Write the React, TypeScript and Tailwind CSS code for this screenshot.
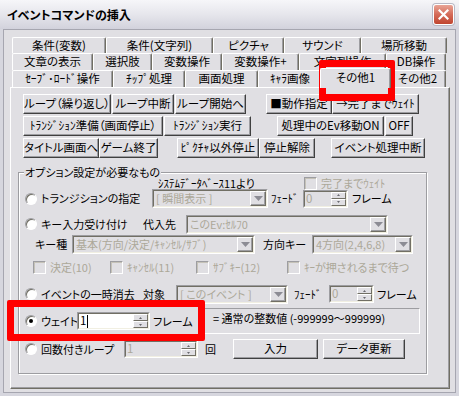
import type { ReactNode } from 'react'

type TabDef = { label: string; w: string; selected?: boolean }

const ROW1: TabDef[] = [
  { label: '条件(変数)', w: 'w-[94px]' },
  { label: '条件(文字列)', w: 'w-[107px]' },
  { label: 'ピクチャ', w: 'w-[71px]' },
  { label: 'サウンド', w: 'w-[77px]' },
  { label: '場所移動', w: 'w-[86px]' },
]
const ROW2: TabDef[] = [
  { label: '文章の表示', w: 'w-[81px]' },
  { label: '選択肢', w: 'w-[59px]' },
  { label: '変数操作', w: 'w-[70px]' },
  { label: '変数操作+', w: 'w-[77px]' },
  { label: '文字列操作', w: 'w-[87px]' },
  { label: 'DB操作', w: 'w-[60px]' },
]
const ROW3: TabDef[] = [
  { label: 'ｾｰﾌﾞ･ﾛｰﾄﾞ操作', w: 'w-[101px]' },
  { label: 'ﾁｯﾌﾟ処理', w: 'w-[72px]' },
  { label: '画面処理', w: 'w-[73px]' },
  { label: 'ｷｬﾗ画像', w: 'w-[64px]' },
  { label: 'その他1', w: 'w-[71px]', selected: true },
  { label: 'その他2', w: 'w-[57px]' },
]

function Tab({ t }: { t: TabDef }) {
  if (t.selected) {
    return (
      <div
        className={`relative z-10 -mx-[2px] -mt-[2px] flex h-[20px] ${t.w} shrink-0 items-center justify-center rounded-t-[2px] border-l border-t border-r border-l-white border-t-white border-r-[#716f64] bg-[#e0dfe3] pb-[1px] shadow-[inset_-1px_0_0_#9d9da1] whitespace-nowrap`}
      >
        {t.label}
      </div>
    )
  }
  return (
    <div
      className={`flex h-full ${t.w} shrink-0 items-center justify-center rounded-t-[2px] border-l border-t border-r border-l-white border-t-white border-r-[#716f64] shadow-[inset_-1px_0_0_#9d9da1] whitespace-nowrap`}
    >
      {t.label}
    </div>
  )
}

function Btn({ w, ml = '', children }: { w: string; ml?: string; children: ReactNode }) {
  return (
    <button
      type="button"
      className={`flex h-[20px] ${w} ${ml} shrink-0 items-center justify-center border border-t-white border-l-white border-r-[#404040] border-b-[#404040] bg-[#e0dfe3] leading-none whitespace-nowrap shadow-[inset_-1px_-1px_0_#9d9da1]`}
    >
      {children}
    </button>
  )
}

function DownArrow() {
  return (
    <span className="flex w-[16px] shrink-0 items-center justify-center border border-t-white border-l-white border-r-[#716f64] border-b-[#716f64] bg-[#e0dfe3] shadow-[inset_-1px_-1px_0_#9d9da1]">
      <svg width="9" height="5" viewBox="0 0 9 5">
        <polygon points="0,0 9,0 4.5,5" fill="#8c8c94" />
      </svg>
    </span>
  )
}

function Combo({ w, text }: { w: string; text: string }) {
  return (
    <div className={`flex h-[19px] ${w} shrink-0 border border-t-[#9d9da1] border-l-[#9d9da1] border-b-white border-r-white`}>
      <div className="flex flex-1 border border-t-[#716f64] border-l-[#716f64] border-b-[#f1efe2] border-r-[#f1efe2] bg-[#e0dfe3]">
        <span className="flex flex-1 items-center overflow-hidden pl-[2px] text-[11px] whitespace-nowrap text-[#aca899]">{text}</span>
        <DownArrow />
      </div>
    </div>
  )
}

function SpinHalf({ up }: { up?: boolean }) {
  return (
    <span className="flex flex-1 items-center justify-center border border-t-white border-l-white border-r-[#716f64] border-b-[#716f64] bg-[#e0dfe3]">
      <svg width="3" height="2" viewBox="0 0 3 2">
        <polygon points={up ? '0,2 3,2 1.5,0' : '0,0 3,0 1.5,2'} fill="#6a6a70" />
      </svg>
    </span>
  )
}

function Spinner({ w, value, enabled }: { w: string; value: string; enabled?: boolean }) {
  return (
    <div className={`flex h-[18px] ${w} shrink-0 border border-t-[#9d9da1] border-l-[#9d9da1] border-b-white border-r-white`}>
      <div
        className={`flex flex-1 border border-t-[#716f64] border-l-[#716f64] border-b-[#f1efe2] border-r-[#f1efe2] ${enabled ? 'bg-white' : 'bg-[#e0dfe3]'}`}
      >
        <span className={`flex flex-1 items-center pl-[1px] leading-none ${enabled ? 'text-black' : 'text-[#aca899]'}`}>
          {value}
          {enabled && <span className="ml-[1px] h-[13px] w-[1px] bg-black" />}
        </span>
        <span className="flex w-[15px] flex-col">
          <SpinHalf up />
          <SpinHalf />
        </span>
      </div>
    </div>
  )
}

function Radio({ checked, ml = 'ml-[6px]' }: { checked?: boolean; ml?: string }) {
  return (
    <span
      className={`${ml} flex h-[12px] w-[12px] shrink-0 items-center justify-center rounded-full border border-t-[#9d9da1] border-l-[#9d9da1] border-b-white border-r-white bg-white shadow-[inset_1px_1px_0_#716f64]`}
    >
      {checked && <span className="h-[4px] w-[4px] rounded-full bg-black" />}
    </span>
  )
}

function Check({ ml = '' }: { ml?: string }) {
  return (
    <span
      className={`${ml} h-[13px] w-[13px] shrink-0 border border-t-[#9d9da1] border-l-[#9d9da1] border-b-white border-r-white bg-[#e0dfe3] shadow-[inset_1px_1px_0_#c5c2b8]`}
    />
  )
}

function Label({ w = '', ml = '', gray, children }: { w?: string; ml?: string; gray?: boolean; children: ReactNode }) {
  return (
    <span className={`${w} ${ml} shrink-0 text-[11px] whitespace-nowrap leading-none ${gray ? 'text-[#aca899]' : 'text-black'}`}>
      {children}
    </span>
  )
}

export default function App() {
  return (
    <div className="relative flex h-[396px] w-[459px] flex-col overflow-hidden bg-[#d6d6de] font-['Noto_Sans_CJK_JP','Noto_Sans',sans-serif] text-[11.5px] text-black [font-feature-settings:'palt']">
      {/* title bar */}
      <div className="flex h-[29px] shrink-0 items-center justify-between bg-gradient-to-b from-[#f6f6f9] via-[#e6e6ec] to-[#d2d2dc] pl-[7px] pr-[5px]">
        <span className="text-[12px] font-bold leading-none">イベントコマンドの挿入</span>
        <span className="flex h-[21px] w-[21px] items-center justify-center rounded-[3px] border border-white bg-gradient-to-b from-[#e8a496] via-[#d46a58] to-[#c0452f] shadow-[0_0_0_1px_#b8b8c4]">
          <svg width="11" height="11" viewBox="0 0 11 11">
            <path d="M1.5 1.5 L9.5 9.5 M9.5 1.5 L1.5 9.5" stroke="#fff" strokeWidth="2.2" strokeLinecap="square" />
          </svg>
        </span>
      </div>

      {/* client */}
      <div className="mx-[3px] mb-[3px] flex flex-1 flex-col border border-[#a6a6b0] bg-[#e0dfe3] pl-[6px] pt-[7px]">
        <div className="flex h-[16px] pl-[2px]">
          {ROW1.map((t) => (
            <Tab key={t.label} t={t} />
          ))}
        </div>
        <div className="flex h-[17px] pl-[2px]">
          {ROW2.map((t) => (
            <Tab key={t.label} t={t} />
          ))}
        </div>
        <div className="flex h-[17px] items-start pl-[2px]">
          {ROW3.map((t) => (
            <Tab key={t.label} t={t} />
          ))}
        </div>

        {/* tab panel */}
        <div className="flex h-[302px] w-[440px] flex-col border border-t-white border-l-white border-r-[#716f64] border-b-[#716f64] shadow-[inset_-1px_-1px_0_#9d9da1]">
          <div className="mt-[6px] flex pl-[12px]">
            <Btn w="w-[88px]">ループ（繰り返し）</Btn>
            <Btn w="w-[62px]" ml="ml-[1px]">ループ中断</Btn>
            <Btn w="w-[71px]" ml="ml-[1px]">ループ開始へ</Btn>
            <Btn w="w-[66px]" ml="ml-[20px]">■動作指定</Btn>
            <Btn w="w-[87px]">→完了までｳｪｲﾄ</Btn>
          </div>
          <div className="mt-[2px] flex pl-[12px]">
            <Btn w="w-[140px]">ﾄﾗﾝｼﾞｼｮﾝ準備（画面停止）</Btn>
            <Btn w="w-[87px]" ml="ml-[1px]">ﾄﾗﾝｼﾞｼｮﾝ実行</Btn>
            <Btn w="w-[107px]" ml="ml-[26px]">処理中のEv移動ON</Btn>
            <Btn w="w-[28px]" ml="ml-[1px]">OFF</Btn>
          </div>
          <div className="mt-[2px] flex pl-[12px]">
            <Btn w="w-[76px]">タイトル画面へ</Btn>
            <Btn w="w-[59px]">ゲーム終了</Btn>
            <Btn w="w-[82px]" ml="ml-[19px]">ﾋﾟｸﾁｬ以外停止</Btn>
            <Btn w="w-[56px]">停止解除</Btn>
            <Btn w="w-[94px]" ml="ml-[16px]">イベント処理中断</Btn>
          </div>

          {/* option group */}
          <div className="relative ml-[7px] mt-[14px] flex h-[202px] w-[409px] flex-col border border-[#9d9da1] shadow-[inset_1px_1px_0_#fff,1px_1px_0_#fff]">
            <span className="absolute -top-[8px] left-[5px] bg-[#e0dfe3] px-[1px] text-[11px] leading-[14px] whitespace-nowrap">
              オプション設定が必要なもの
            </span>

            <div className="mt-[4px] flex h-[12px] items-center">
              <Label w="w-[146px]" ml="ml-[139px]">ｼｽﾃﾑﾃﾞｰﾀﾍﾞｰｽ11より</Label>
              <Check />
              <Label ml="ml-[4px]" gray>
                完了までｳｪｲﾄ
              </Label>
            </div>

            <div className="flex h-[19px] items-center">
              <Radio />
              <Label w="w-[111px]" ml="ml-[4px]">トランジションの指定</Label>
              <Combo w="w-[116px]" text="[ 瞬間表示 ]" />
              <Label w="w-[32px]" ml="ml-[3px]">ﾌｪｰﾄﾞ</Label>
              <Spinner w="w-[45px]" value="0" />
              <Label ml="ml-[4px]">フレーム</Label>
            </div>

            <div className="mt-[7px] flex h-[18px] items-center">
              <Radio />
              <Label w="w-[102px]" ml="ml-[4px]">キー入力受け付け</Label>
              <Label w="w-[43px]">代入先</Label>
              <Combo w="w-[202px]" text="このEv:ｾﾙﾌ0" />
            </div>

            <div className="mt-[2px] flex h-[18px] items-center">
              <Label w="w-[37px]" ml="ml-[16px]">キー種</Label>
              <Combo w="w-[183px]" text="基本(方向/決定/ｷｬﾝｾﾙ/ｻﾌﾞ)" />
              <Label w="w-[49px]" ml="ml-[8px]">方向キー</Label>
              <Combo w="w-[101px]" text="4方向(2,4,6,8)" />
            </div>

            <div className="mt-[8px] flex h-[13px] items-center">
              <Check ml="ml-[14px]" />
              <Label w="w-[60px]" ml="ml-[4px]" gray>
                決定(10)
              </Label>
              <Check />
              <Label w="w-[69px]" ml="ml-[4px]" gray>
                ｷｬﾝｾﾙ(11)
              </Label>
              <Check />
              <Label w="w-[74px]" ml="ml-[4px]" gray>
                ｻﾌﾞｷｰ(12)
              </Label>
              <Check />
              <Label ml="ml-[4px]" gray>
                ｷｰが押されるまで待つ
              </Label>
            </div>

            <div className="mt-[11px] flex h-[18px] items-center">
              <Radio />
              <Label w="w-[102px]" ml="ml-[4px]">イベントの一時消去</Label>
              <Label w="w-[33px]">対象</Label>
              <Combo w="w-[112px]" text="[ このイベント ]" />
              <Label w="w-[35px]" ml="ml-[6px]">ﾌｪｰﾄﾞ</Label>
              <Spinner w="w-[45px]" value="0" />
              <Label ml="ml-[3px]">フレーム</Label>
            </div>

            <div className="mt-[9px] flex h-[18px] items-center">
              <Radio checked />
              <Label w="w-[36px]" ml="ml-[4px]">ウェイト</Label>
              <Spinner w="w-[73px]" value="1" enabled />
              <Label w="w-[47px]" ml="ml-[3px]">フレーム</Label>
              <div className="flex h-[26px] w-[220px] shrink-0 items-start border border-t-[#9d9da1] border-l-[#808080] border-b-white border-r-white pl-[12px] pt-[4px]">
                <span className="text-[11px] leading-none whitespace-nowrap">= 通常の整数値 (-999999〜999999)</span>
              </div>
            </div>

            <div className="mt-[10px] flex h-[18px] items-center">
              <Radio />
              <Label w="w-[83px]" ml="ml-[4px]">回数付きループ</Label>
              <Spinner w="w-[74px]" value="1" />
              <Label w="w-[14px]" ml="ml-[7px]">回</Label>
              <Btn w="w-[85px]" ml="ml-[14px]">入力</Btn>
              <Btn w="w-[82px]" ml="ml-[5px]">データ更新</Btn>
            </div>
          </div>
        </div>
      </div>

      {/* red highlight annotations */}
      <div className="pointer-events-none absolute left-[319px] top-[60px] h-[41px] w-[76px] rounded-[2px] border-[7px] border-[#ff0000]" />
      <div className="pointer-events-none absolute left-[7px] top-[300px] h-[41px] w-[198px] rounded-[2px] border-[7px] border-[#ff0000]" />
    </div>
  )
}
